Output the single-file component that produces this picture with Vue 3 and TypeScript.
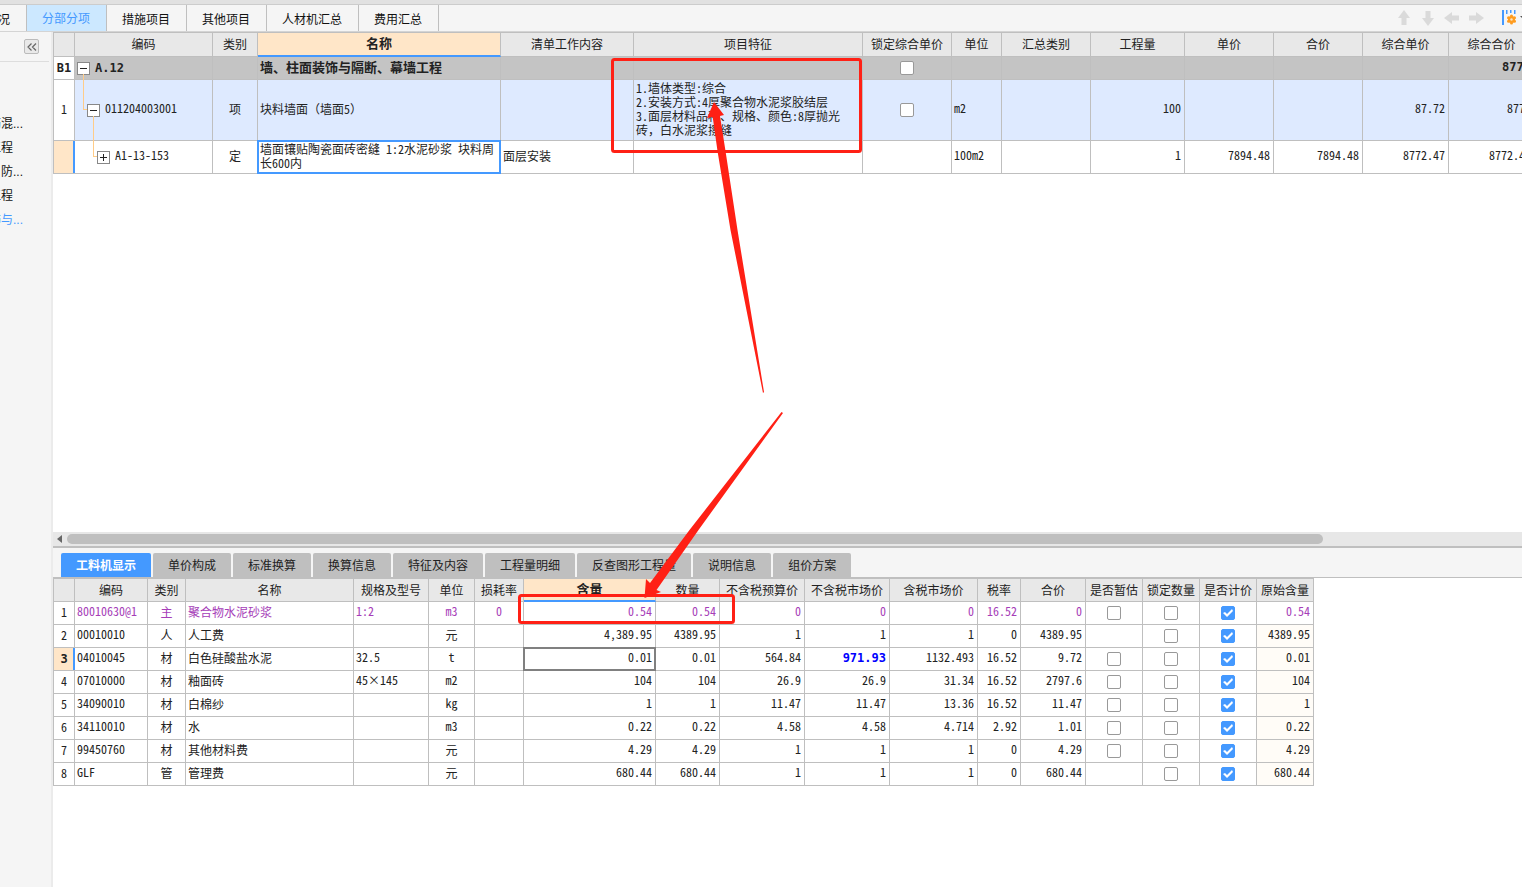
<script setup lang="ts">
interface Column {
  label: string
  width: number
  align?: 'left' | 'center' | 'right'
  active?: boolean
}
interface MaterialRow {
  cells: string[]
  estimate: boolean
  original: string
  changed?: number
}

const topTabs = ['况', '分部分项', '措施项目', '其他项目', '人材机汇总', '费用汇总']
const sideItems = ['筋混...', '工程', '、防...', '工程', '饰与...']
const detailTabs = ['工料机显示', '单价构成', '标准换算', '换算信息', '特征及内容', '工程量明细', '反查图形工程量', '说明信息', '组价方案']

const billColumns: Column[] = [
  { label: '编码', width: 138 },
  { label: '类别', width: 45 },
  { label: '名称', width: 243, active: true },
  { label: '清单工作内容', width: 133 },
  { label: '项目特征', width: 229 },
  { label: '锁定综合单价', width: 89 },
  { label: '单位', width: 50 },
  { label: '汇总类别', width: 89 },
  { label: '工程量', width: 94 },
  { label: '单价', width: 89 },
  { label: '合价', width: 89 },
  { label: '综合单价', width: 86 },
  { label: '综合合价', width: 86 },
]

const features = ['1.墙体类型:综合', '2.安装方式:4厚聚合物水泥浆胶结层', '3.面层材料品种、规格、颜色:8厚抛光', '砖，白水泥浆擦缝']

const materialColumns: Column[] = [
  { label: '编码', width: 73, align: 'left' },
  { label: '类别', width: 38, align: 'center' },
  { label: '名称', width: 168, align: 'left' },
  { label: '规格及型号', width: 75, align: 'left' },
  { label: '单位', width: 46, align: 'center' },
  { label: '损耗率', width: 49, align: 'center' },
  { label: '含量', width: 132, align: 'right', active: true },
  { label: '数量', width: 64, align: 'right' },
  { label: '不含税预算价', width: 85, align: 'right' },
  { label: '不含税市场价', width: 85, align: 'right' },
  { label: '含税市场价', width: 88, align: 'right' },
  { label: '税率', width: 43, align: 'right' },
  { label: '合价', width: 65, align: 'right' },
  { label: '是否暂估', width: 57 },
  { label: '锁定数量', width: 57 },
  { label: '是否计价', width: 57 },
  { label: '原始含量', width: 57 },
]

const materials: MaterialRow[] = [
  { cells: ['80010630@1', '主', '聚合物水泥砂浆', '1:2', 'm3', '0', '0.54', '0.54', '0', '0', '0', '16.52', '0'], estimate: true, original: '0.54' },
  { cells: ['00010010', '人', '人工费', '', '元', '', '4,389.95', '4389.95', '1', '1', '1', '0', '4389.95'], estimate: false, original: '4389.95' },
  { cells: ['04010045', '材', '白色硅酸盐水泥', '32.5', 't', '', '0.01', '0.01', '564.84', '971.93', '1132.493', '16.52', '9.72'], estimate: true, original: '0.01', changed: 9 },
  { cells: ['07010000', '材', '釉面砖', '45×145', 'm2', '', '104', '104', '26.9', '26.9', '31.34', '16.52', '2797.6'], estimate: true, original: '104' },
  { cells: ['34090010', '材', '白棉纱', '', 'kg', '', '1', '1', '11.47', '11.47', '13.36', '16.52', '11.47'], estimate: true, original: '1' },
  { cells: ['34110010', '材', '水', '', 'm3', '', '0.22', '0.22', '4.58', '4.58', '4.714', '2.92', '1.01'], estimate: true, original: '0.22' },
  { cells: ['99450760', '材', '其他材料费', '', '元', '', '4.29', '4.29', '1', '1', '1', '0', '4.29'], estimate: true, original: '4.29' },
  { cells: ['GLF', '管', '管理费', '', '元', '', '680.44', '680.44', '1', '1', '1', '0', '680.44'], estimate: false, original: '680.44' },
]

const tableWidth = (columns: Column[]): string => `${columns.reduce((sum, c) => sum + c.width, 22)}px`
</script>

<template>
  <div class="app">
    <div class="strip"></div>
    <header class="topbar">
      <nav class="top-tabs">
        <button v-for="(tab, i) in topTabs" :key="tab" type="button" :class="['top-tab', { active: i === 1, first: i === 0 }]">{{ tab }}</button>
      </nav>
      <div class="tools">
        <button type="button" class="tool" aria-label="上移"><svg width="12" height="16" viewBox="0 0 12 16"><path d="M6 0 12 8H8.500V15H3.500V8H0Z" fill="#dadada" /></svg></button>
        <button type="button" class="tool" aria-label="下移"><svg width="12" height="16" viewBox="0 0 12 16"><path d="M6 16 12 8H8.500V1H3.500V8H0Z" fill="#dadada" /></svg></button>
        <button type="button" class="tool" aria-label="左移"><svg width="16" height="12" viewBox="0 0 16 12"><path d="M0 6 8 0V3.500H15V8.500H8V12Z" fill="#dadada" /></svg></button>
        <button type="button" class="tool" aria-label="右移"><svg width="16" height="12" viewBox="0 0 16 12"><path d="M16 6 8 0V3.500H1V8.500H8V12Z" fill="#dadada" /></svg></button>
        <button type="button" class="tool setup" aria-label="列设置">
          <svg width="20" height="16" viewBox="0 0 20 16">
            <path d="M0 0H2V15H0ZM4 0H5.500V4H4ZM8 0H9.500V3H8ZM12 0H13.500V4H12Z" fill="#49f" />
            <g fill="#ff9c1f">
              <circle cx="9.500" cy="9.500" r="3.500" />
              <circle cx="9.500" cy="6" r="1.500" />
              <circle cx="9.500" cy="13" r="1.500" />
              <circle cx="6.500" cy="7.800" r="1.500" />
              <circle cx="12.500" cy="7.800" r="1.500" />
              <circle cx="6.500" cy="11.200" r="1.500" />
              <circle cx="12.500" cy="11.200" r="1.500" />
            </g>
            <circle cx="9.500" cy="9.500" r="1.200" fill="#fde3c0" />
            <path d="M18 6H24L21 9Z" fill="#555" />
          </svg>
        </button>
      </div>
    </header>

    <div class="body">
      <aside class="sidebar">
        <div class="side-head">
          <button type="button" class="collapse" aria-label="收起">
            <svg width="10" height="8" viewBox="0 0 10 8"><path d="M4.500 0.500 1 4 4.500 7.500M9 0.500 5.500 4 9 7.500" fill="none" stroke="#666" stroke-width="1.200" /></svg>
          </button>
        </div>
        <ul class="side-list">
          <li v-for="(item, i) in sideItems" :key="i" :class="{ current: i === 4 }">{{ item }}</li>
        </ul>
      </aside>

      <main class="main">
        <section class="bill">
          <table class="grid wide-grid" :style="{ width: tableWidth(billColumns) }">
            <colgroup>
              <col class="idx-col" />
              <col v-for="c in billColumns" :key="c.label" :style="{ width: c.width + 'px' }" />
            </colgroup>
            <thead>
              <tr>
                <th></th>
                <th v-for="c in billColumns" :key="c.label" :class="{ on: c.active }">{{ c.label }}</th>
              </tr>
            </thead>
            <tbody>
              <tr class="group">
                <td class="idx strong">B1</td>
                <td class="tree"><div class="node"><button type="button" class="toggle" aria-label="折叠"></button><span class="wide">A.12</span></div></td>
                <td></td>
                <td>墙、柱面装饰与隔断、幕墙工程</td>
                <td></td>
                <td></td>
                <td class="box"><input type="checkbox" class="check" aria-label="锁定综合单价" /></td>
                <td></td>
                <td></td>
                <td></td>
                <td></td>
                <td></td>
                <td></td>
                <td class="right wide">8772</td>
              </tr>
              <tr class="item">
                <td class="idx">1</td>
                <td class="tree branch first"><div class="node level1"><button type="button" class="toggle" aria-label="折叠"></button><span class="code">011204003001</span></div></td>
                <td class="center">项</td>
                <td>块料墙面（墙面5）</td>
                <td></td>
                <td><div v-for="line in features" :key="line" class="line">{{ line }}</div></td>
                <td class="box"><input type="checkbox" class="check" aria-label="锁定综合单价" /></td>
                <td class="n">m2</td>
                <td></td>
                <td class="right n">100</td>
                <td></td>
                <td></td>
                <td class="right n">87.72</td>
                <td class="right n">8772</td>
              </tr>
              <tr class="quota">
                <td class="idx picked"></td>
                <td class="tree branch second"><div class="node level2"><button type="button" class="toggle plus" aria-label="展开"></button><span class="code">A1-13-153</span></div></td>
                <td class="center">定</td>
                <td class="editing"><div class="line">墙面镶贴陶瓷面砖密缝 1:2水泥砂浆 块料周</div><div class="line">长600内</div></td>
                <td>面层安装</td>
                <td></td>
                <td></td>
                <td class="n">100m2</td>
                <td></td>
                <td class="right n">1</td>
                <td class="right n">7894.48</td>
                <td class="right n">7894.48</td>
                <td class="right n">8772.47</td>
                <td class="right n">8772.47</td>
              </tr>
            </tbody>
          </table>
        </section>

        <div class="scrollbar">
          <svg width="5" height="8" viewBox="0 0 5 8"><path d="M5 0V8L0 4Z" fill="#666" /></svg>
          <div class="thumb"></div>
        </div>

        <section class="detail">
          <nav class="detail-tabs">
            <button v-for="(tab, i) in detailTabs" :key="tab" type="button" :class="['detail-tab', { active: i === 0 }]">{{ tab }}</button>
          </nav>
          <table class="grid compact" :style="{ width: tableWidth(materialColumns) }">
            <colgroup>
              <col class="idx-col" />
              <col v-for="c in materialColumns" :key="c.label" :style="{ width: c.width + 'px' }" />
            </colgroup>
            <thead>
              <tr>
                <th></th>
                <th v-for="c in materialColumns" :key="c.label" :class="{ on: c.active }">{{ c.label }}</th>
              </tr>
            </thead>
            <tbody>
              <tr v-for="(row, r) in materials" :key="row.cells[0]" :class="{ primary: r === 0 }">
                <td :class="['idx', { picked: r === 2, strong: r === 2 }]">{{ r + 1 }}</td>
                <td v-for="(cell, c) in row.cells" :key="c" :class="[materialColumns[c].align, { n: /^[\x20-\x7e×]+$/.test(cell), changed: row.changed === c, focus: r === 2 && c === 6 }]">{{ cell }}</td>
                <td class="box"><input v-if="row.estimate" type="checkbox" class="check" aria-label="是否暂估" /></td>
                <td class="box"><input type="checkbox" class="check" aria-label="锁定数量" /></td>
                <td class="box"><input type="checkbox" class="check" checked aria-label="是否计价" /></td>
                <td class="right n original">{{ row.original }}</td>
              </tr>
            </tbody>
          </table>
        </section>
      </main>
    </div>

    <svg class="marks" width="1522" height="887" viewBox="0 0 1522 887" aria-hidden="true">
      <rect x="612.500" y="59.500" width="248" height="92" rx="2" />
      <rect x="519.500" y="595.500" width="214" height="27" rx="2" />
      <path d="M714 102 724 115 720 116 725.500 151 737.500 230 764 392 763 393 730.500 230 717.500 151 712.700 117 707 118Z" />
      <path d="M644.500 598 646 579 650 583 689.500 530 781.500 412 783 413 698.500 530 656.500 590 661 592Z" />
    </svg>
  </div>
</template>

<style>
body {
  margin: 0;
  background: #fff;
}
</style>

<style scoped>
.app {
  position: relative;
  display: flex;
  flex-direction: column;
  height: 100vh;
  overflow: hidden;
  background: #f5f5f5;
  color: #222;
  font: 12px/14px "Liberation Sans", "Noto Sans CJK SC", sans-serif;
}
button {
  margin: 0;
  padding: 0;
  border: 0;
  background: none;
  color: inherit;
  font: inherit;
}
.strip {
  flex: none;
  height: 4px;
  background: #e1e1e1;
  border-bottom: 1px solid #ccc;
}
.topbar {
  flex: none;
  display: flex;
  justify-content: space-between;
  height: 26px;
  border-bottom: 1px solid #d4d4d4;
}
.top-tabs {
  display: flex;
}
.top-tab {
  padding: 4px 16px 0 15px;
  border-right: 1px solid #bfbfbf;
  color: #111;
  white-space: nowrap;
}
.top-tab.first {
  padding-left: 0;
  margin-left: -2px;
}
.top-tab.active {
  padding-top: 2px;
  background: #cce8ff;
  color: #49f;
}
.tools {
  display: flex;
  align-items: center;
}
.tool {
  display: flex;
  justify-content: center;
  width: 24px;
}
.tool.setup {
  width: 20px;
  margin-left: 14px;
}
.body {
  flex: 1;
  display: flex;
  min-height: 0;
}
.sidebar {
  flex: none;
  width: 51px;
  overflow: hidden;
  border-right: 2px solid #ebebeb;
}
.side-head {
  display: flex;
  height: 29px;
  margin-right: 2px;
  border-bottom: 1px solid #ddd;
}
.collapse {
  display: flex;
  align-items: center;
  justify-content: center;
  width: 15px;
  height: 15px;
  margin: 7px 0 0 24px;
  border: 1px solid #bbb;
  border-radius: 2px;
  background: #e9e9e9;
  box-sizing: border-box;
}
.side-list {
  margin: 50px 0 0;
  padding: 0;
  list-style: none;
}
.side-list li {
  height: 24px;
  line-height: 24px;
  text-indent: -11px;
  white-space: nowrap;
  color: #111;
}
.side-list .current {
  color: #49f;
}
.main {
  flex: 1;
  display: flex;
  flex-direction: column;
  min-width: 0;
  background: #fff;
}
.bill {
  flex: 1;
  min-height: 0;
  overflow: hidden;
}
.grid {
  table-layout: fixed;
  border-collapse: separate;
  border-spacing: 0;
  border-top: 1px solid #bfbfbf;
  border-left: 1px solid #bfbfbf;
  box-sizing: border-box;
  font-family: "Noto Sans Mono CJK SC", "Noto Sans CJK SC", monospace;
}
.idx-col {
  width: 21px;
}
.grid th,
.grid td {
  position: relative;
  box-sizing: border-box;
  border-right: 1px solid #bfbfbf;
  border-bottom: 1px solid #bfbfbf;
  padding: 0 2px 2px;
  text-align: left;
  white-space: nowrap;
}
.grid th {
  height: 24px;
  padding: 0;
  background: #e8e8e8;
  font-weight: 400;
  text-align: center;
}
.wide-grid th {
  padding-bottom: 2px;
}
.grid th.on {
  border-bottom: 2px solid #49f;
  background: #ffe6c8;
  font-size: 13px;
  font-weight: 700;
}
.compact th.on {
  padding-bottom: 2px;
}
.compact th,
.compact td {
  height: 23px;
}
.grid td.center {
  text-align: center;
}
.grid td.right {
  padding-right: 3px;
  text-align: right;
}
.grid td.n {
  padding-bottom: 4px;
}
.grid td.tree,
.grid td.box {
  padding-bottom: 0;
}
.code {
  padding-bottom: 4px;
}
.wide {
  font: 700 12px/14px "DejaVu Sans Mono", monospace;
}
.group {
  height: 23px;
  font-size: 13px;
  font-weight: 700;
  background: #c4c4c4;
}
.item {
  height: 61px;
  background: #deeaff;
}
.quota {
  height: 33px;
}
.grid td.idx {
  padding: 0 0 2px;
  background: #fff;
  text-align: center;
}
.grid td.strong {
  padding-bottom: 0;
  font: 700 12px/14px "DejaVu Sans Mono", monospace;
}
.grid td.picked {
  background: #ffe6c8;
}
.grid td.picked::after {
  content: "";
  position: absolute;
  inset: 0 -1px 0 auto;
  width: 2px;
  background: #49f;
}
.line {
  height: 14px;
}
.node {
  display: flex;
  align-items: center;
  gap: 5px;
}
.level1 {
  padding-left: 10px;
}
.level2 {
  padding-left: 20px;
}
.toggle {
  position: relative;
  flex: none;
  width: 13px;
  height: 13px;
  border: 1px solid #888;
  background: #fff;
  box-sizing: border-box;
}
.toggle::before,
.toggle.plus::after {
  content: "";
  position: absolute;
  top: 5px;
  left: 2px;
  width: 7px;
  height: 1px;
  background: #222;
}
.toggle.plus::after {
  top: 2px;
  left: 5px;
  width: 1px;
  height: 7px;
}
.branch::before {
  content: "";
  position: absolute;
  border: solid #fc8;
  border-width: 0 0 1px 1px;
  width: 3px;
}
.first::before {
  left: 8px;
  top: -6px;
  bottom: 50%;
}
.second::before {
  left: 18px;
  top: -25px;
  bottom: 50%;
}
.editing::after {
  content: "";
  position: absolute;
  inset: -1px;
  border: 2px solid #49f;
}
.check {
  appearance: none;
  position: relative;
  display: block;
  width: 14px;
  height: 14px;
  margin: 0 auto;
  border: 1px solid #999;
  border-radius: 2px;
  background: #fff;
  box-sizing: border-box;
}
.check:checked {
  border-color: #49f;
  background: #49f;
}
.check:checked::after {
  content: "";
  position: absolute;
  inset: -1px;
  background: #fff;
  clip-path: polygon(2px 7px, 4px 6px, 6px 8px, 11px 3px, 12px 5px, 6px 11px);
}
.scrollbar {
  flex: none;
  display: flex;
  align-items: center;
  gap: 5px;
  height: 14px;
  padding: 0 199px 0 4px;
  border-bottom: 2px solid #bfbfbf;
  background: #e7e7e7;
}
.thumb {
  flex: 1;
  height: 10px;
  border-radius: 5px;
  background: #bfbfbf;
}
.detail {
  flex: none;
  height: 339px;
}
.detail-tabs {
  display: flex;
  gap: 2px;
  padding: 5px 8px 0;
  border-bottom: 1px solid #bfbfbf;
  background: #f5f5f5;
}
.detail-tab {
  height: 24px;
  padding: 1px 15px 0;
  border-radius: 2px 2px 0 0;
  background: #bfbfbf;
  white-space: nowrap;
}
.detail-tab.active {
  background: #49f;
  color: #fff;
  font-weight: 700;
}
.primary td:not(.idx) {
  color: #a63db8;
}
.grid td.changed {
  padding-bottom: 2px;
  color: #00f;
  font: 700 12px/14px "DejaVu Sans Mono", monospace;
}
.focus::after {
  content: "";
  position: absolute;
  inset: -1px;
  border: 2px solid #808080;
}
.original {
  background: #fffcf7;
}
.primary .original {
  background: #fff;
}
.marks {
  position: absolute;
  top: 0;
  left: 0;
  pointer-events: none;
}
.marks rect {
  fill: none;
  stroke: #ff2015;
  stroke-width: 3;
}
.marks path {
  fill: #ff2015;
}
</style>
